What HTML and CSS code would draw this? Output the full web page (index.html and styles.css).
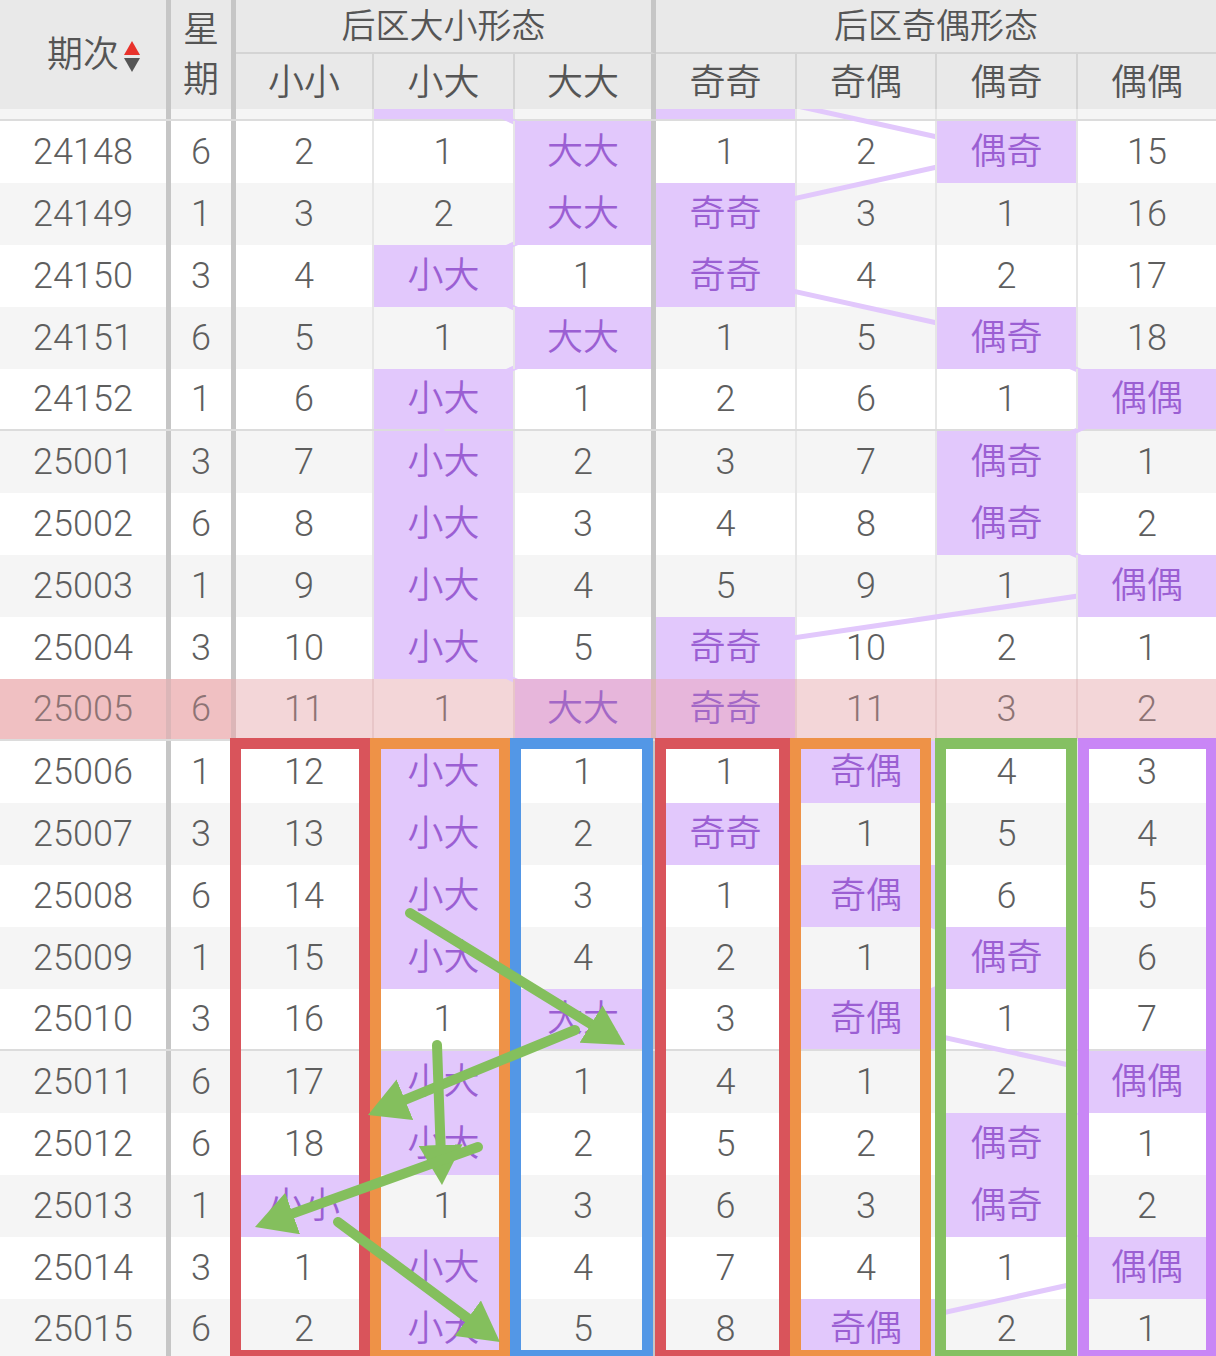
FILE: index.html
```html
<!DOCTYPE html>
<html lang="zh">
<head>
<meta charset="utf-8">
<title>后区形态走势</title>
<link rel="stylesheet" href="styles.css">
</head>
<body>
<div class="chart">
  <div class="thead">
    <div class="h h-issue"><span>期次</span><svg class="sort" width="18" height="32" viewBox="0 0 18 32"><polygon points="1,15 17,15 9,1" fill="#e8322b"/><polygon points="1,18 17,18 9,32" fill="#555"/></svg></div>
    <div class="h h-week">星<br>期</div>
    <div class="h h-group h-g1">后区大小形态</div>
    <div class="h h-group h-g2">后区奇偶形态</div>
    <div class="h h-sub">小小</div>
    <div class="h h-sub t">小大</div>
    <div class="h h-sub t s">大大</div>
    <div class="h h-sub">奇奇</div>
    <div class="h h-sub t">奇偶</div>
    <div class="h h-sub t">偶奇</div>
    <div class="h h-sub t">偶偶</div>
  </div>
  <div class="tbody">
    <div class="rows">
      <div class="row alt five first"><div class="c i"></div><div class="c w"></div><div class="c"></div><div class="c t on"></div><div class="c t s"></div><div class="c on"></div><div class="c t"></div><div class="c t"></div><div class="c t"></div></div>
      <div class="row"><div class="c i">24148</div><div class="c w">6</div><div class="c">2</div><div class="c t">1</div><div class="c t s on">大大</div><div class="c">1</div><div class="c t">2</div><div class="c t on">偶奇</div><div class="c t">15</div></div>
      <div class="row alt"><div class="c i">24149</div><div class="c w">1</div><div class="c">3</div><div class="c t">2</div><div class="c t s on">大大</div><div class="c on">奇奇</div><div class="c t">3</div><div class="c t">1</div><div class="c t">16</div></div>
      <div class="row"><div class="c i">24150</div><div class="c w">3</div><div class="c">4</div><div class="c t on">小大</div><div class="c t s">1</div><div class="c on">奇奇</div><div class="c t">4</div><div class="c t">2</div><div class="c t">17</div></div>
      <div class="row alt"><div class="c i">24151</div><div class="c w">6</div><div class="c">5</div><div class="c t">1</div><div class="c t s on">大大</div><div class="c">1</div><div class="c t">5</div><div class="c t on">偶奇</div><div class="c t">18</div></div>
      <div class="row five"><div class="c i">24152</div><div class="c w">1</div><div class="c">6</div><div class="c t on">小大</div><div class="c t s">1</div><div class="c">2</div><div class="c t">6</div><div class="c t">1</div><div class="c t on">偶偶</div></div>
      <div class="row alt"><div class="c i">25001</div><div class="c w">3</div><div class="c">7</div><div class="c t on">小大</div><div class="c t s">2</div><div class="c">3</div><div class="c t">7</div><div class="c t on">偶奇</div><div class="c t">1</div></div>
      <div class="row"><div class="c i">25002</div><div class="c w">6</div><div class="c">8</div><div class="c t on">小大</div><div class="c t s">3</div><div class="c">4</div><div class="c t">8</div><div class="c t on">偶奇</div><div class="c t">2</div></div>
      <div class="row alt"><div class="c i">25003</div><div class="c w">1</div><div class="c">9</div><div class="c t on">小大</div><div class="c t s">4</div><div class="c">5</div><div class="c t">9</div><div class="c t">1</div><div class="c t on">偶偶</div></div>
      <div class="row"><div class="c i">25004</div><div class="c w">3</div><div class="c">10</div><div class="c t on">小大</div><div class="c t s">5</div><div class="c on">奇奇</div><div class="c t">10</div><div class="c t">2</div><div class="c t">1</div></div>
      <div class="row hot five"><div class="c i">25005</div><div class="c w">6</div><div class="c">11</div><div class="c t">1</div><div class="c t s on">大大</div><div class="c on">奇奇</div><div class="c t">11</div><div class="c t">3</div><div class="c t">2</div></div>
      <div class="row"><div class="c i">25006</div><div class="c w">1</div><div class="c">12</div><div class="c t on">小大</div><div class="c t s">1</div><div class="c">1</div><div class="c t on">奇偶</div><div class="c t">4</div><div class="c t">3</div></div>
      <div class="row alt"><div class="c i">25007</div><div class="c w">3</div><div class="c">13</div><div class="c t on">小大</div><div class="c t s">2</div><div class="c on">奇奇</div><div class="c t">1</div><div class="c t">5</div><div class="c t">4</div></div>
      <div class="row"><div class="c i">25008</div><div class="c w">6</div><div class="c">14</div><div class="c t on">小大</div><div class="c t s">3</div><div class="c">1</div><div class="c t on">奇偶</div><div class="c t">6</div><div class="c t">5</div></div>
      <div class="row alt"><div class="c i">25009</div><div class="c w">1</div><div class="c">15</div><div class="c t on">小大</div><div class="c t s">4</div><div class="c">2</div><div class="c t">1</div><div class="c t on">偶奇</div><div class="c t">6</div></div>
      <div class="row five"><div class="c i">25010</div><div class="c w">3</div><div class="c">16</div><div class="c t">1</div><div class="c t s on">大大</div><div class="c">3</div><div class="c t on">奇偶</div><div class="c t">1</div><div class="c t">7</div></div>
      <div class="row alt"><div class="c i">25011</div><div class="c w">6</div><div class="c">17</div><div class="c t on">小大</div><div class="c t s">1</div><div class="c">4</div><div class="c t">1</div><div class="c t">2</div><div class="c t on">偶偶</div></div>
      <div class="row"><div class="c i">25012</div><div class="c w">6</div><div class="c">18</div><div class="c t on">小大</div><div class="c t s">2</div><div class="c">5</div><div class="c t">2</div><div class="c t on">偶奇</div><div class="c t">1</div></div>
      <div class="row alt"><div class="c i">25013</div><div class="c w">1</div><div class="c on">小小</div><div class="c t">1</div><div class="c t s">3</div><div class="c">6</div><div class="c t">3</div><div class="c t on">偶奇</div><div class="c t">2</div></div>
      <div class="row"><div class="c i">25014</div><div class="c w">3</div><div class="c">1</div><div class="c t on">小大</div><div class="c t s">4</div><div class="c">7</div><div class="c t">4</div><div class="c t">1</div><div class="c t on">偶偶</div></div>
      <div class="row alt five"><div class="c i">25015</div><div class="c w">6</div><div class="c">2</div><div class="c t on">小大</div><div class="c t s">5</div><div class="c">8</div><div class="c t on">奇偶</div><div class="c t">2</div><div class="c t">1</div></div>
    </div>
    <svg class="trend" width="1216" height="1247" viewBox="0 109 1216 1247">
      <polyline points="442,90 582,152 582,214 442,276 582,338 442,400 442,462 442,524 442,586 442,648 582,710 442,772 442,834 442,896 442,958 582,1020 442,1082 442,1144 304,1206 442,1268 442,1330"/>
      <polyline points="725,90 1005,152 725,214 725,276 1005,338 1146,400 1005,462 1005,524 1146,586 725,648 725,710 865,772 725,834 865,896 1005,958 865,1020 1146,1082 1005,1144 1005,1206 1146,1268 865,1330"/>
    </svg>
    <svg class="overlay" width="1216" height="1247" viewBox="0 109 1216 1247">
      <defs>
        <marker id="ah" markerUnits="userSpaceOnUse" markerWidth="40" markerHeight="44" viewBox="0 0 40 44" refX="18" refY="22" orient="auto">
          <path d="M0 0 L40 22 L0 44 Z" fill="#84bf5d"/>
        </marker>
      </defs>
      <g class="boxes">
        <rect class="b-red" x="235.5" y="743.5" width="129" height="612"/>
        <rect class="b-orange" x="375.5" y="743.5" width="129" height="612"/>
        <rect class="b-blue" x="515.5" y="743.5" width="132" height="612"/>
        <rect class="b-red" x="660.5" y="743.5" width="124" height="612"/>
        <rect class="b-orange" x="795.5" y="743.5" width="130" height="612"/>
        <rect class="b-green" x="940.5" y="743.5" width="131" height="612"/>
        <rect class="b-purple" x="1083.5" y="743.5" width="128" height="612"/>
      </g>
      <g class="arrows">
        <line x1="410" y1="913" x2="606.3" y2="1033.5"/>
        <line x1="575" y1="1030" x2="388.3" y2="1106.6"/>
        <line x1="437" y1="1045" x2="441.2" y2="1163"/>
        <line x1="478" y1="1147" x2="275.7" y2="1219.6"/>
        <line x1="338" y1="1222" x2="482.3" y2="1328.9"/>
      </g>
    </svg>
  </div>
</div>
</body>
</html>
```

FILE: styles.css
```css
html, body {
  margin: 0;
  padding: 0;
  overflow: hidden;
  background: #fff;
}

body {
  font-family: Roboto, "Noto Sans CJK SC", sans-serif;
  font-weight: 350;
}

.chart {
  width: 1216px;
}

/* ---------- header ---------- */
.thead {
  display: grid;
  grid-template-columns: 171px 65px 136px 141px 143px 139px 140px 141px 140px;
  grid-template-rows: 54px 55px;
  background: #e9e9e9;
  color: #555;
  font-size: 36px;
  position: relative;
  z-index: 5;
}

.h {
  display: flex;
  align-items: center;
  justify-content: center;
  box-sizing: border-box;
  line-height: 1;
}

.h-issue {
  grid-column: 1;
  grid-row: 1 / 3;
  border-right: 5px solid #c6c6c6;
  padding-left: 22px;
  gap: 4px;
}

.sort {
  display: block;
  margin-top: 2px;
}

.h-week {
  grid-column: 2;
  grid-row: 1 / 3;
  border-right: 5px solid #c6c6c6;
  line-height: 50px;
  text-align: center;
  flex-direction: column;
}

.h-group {
  grid-row: 1;
  border-bottom: 2px solid #d4d4d4;
  font-size: 34px;
}

.h-g1 {
  grid-column: 3 / 6;
  border-right: 5px solid #c6c6c6;
}

.h-g2 {
  grid-column: 6 / 10;
}

.h-sub {
  grid-row: 2;
  padding-top: 3px;
}

.h-sub.t {
  border-left: 2px solid #d4d4d4;
}

.h-sub.s {
  border-right: 5px solid #c6c6c6;
}

/* ---------- body ---------- */
.tbody {
  position: relative;
  height: 1247px;
  overflow: hidden;
  isolation: isolate;
}

.rows {
  display: flex;
  flex-direction: column;
}

.row {
  display: grid;
  grid-template-columns: 171px 65px 136px 141px 143px 139px 140px 141px 140px;
  height: 62px;
  box-sizing: border-box;
  background: #fff;
  color: #5e5e5e;
  font-size: 36px;
}

.row.first {
  margin-top: -50px;
}

.row.alt {
  background: #f5f5f5;
}

.row.five {
  border-bottom: 2px solid #dcdcdc;
}

.c {
  display: flex;
  align-items: center;
  justify-content: center;
  box-sizing: border-box;
  line-height: 1;
}

.c.i,
.c.w,
.c.s {
  border-right: 5px solid #c6c6c6;
}

.c.t {
  border-left: 2px solid #e6e6e6;
}

.c.on {
  background: #e2c8fc;
  color: #9b5fd3;
  position: relative;
  z-index: 2;
}

/* highlighted (current) row */
.row.hot {
  background: #f3d6d8;
  color: #8d7374;
}

.row.hot .c.i,
.row.hot .c.w {
  background: #f0c0c2;
}

.row.hot .c.i,
.row.hot .c.w,
.row.hot .c.s {
  border-right-color: #dcb6b8;
}

.row.hot .c.t {
  border-left-color: #e8c6c8;
}

.row.hot .c.on {
  background: #e7b6db;
  color: #a368c6;
}

/* ---------- overlays ---------- */
.trend {
  position: absolute;
  left: 0;
  top: 0;
  z-index: 1;
}

.trend polyline {
  fill: none;
  stroke: #e2c8fc;
  stroke-width: 5;
  stroke-linejoin: round;
}

.overlay {
  position: absolute;
  left: 0;
  top: 0;
  z-index: 3;
}

.boxes rect {
  fill: none;
  stroke-width: 11;
}

.b-red { stroke: #d9545b; }
.b-orange { stroke: #ee9247; }
.b-blue { stroke: #5397e6; }
.b-green { stroke: #85c062; }
.b-purple { stroke: #c986f6; }

.arrows line {
  stroke: #84bf5d;
  stroke-width: 10;
  stroke-linecap: round;
  marker-end: url(#ah);
}
```
